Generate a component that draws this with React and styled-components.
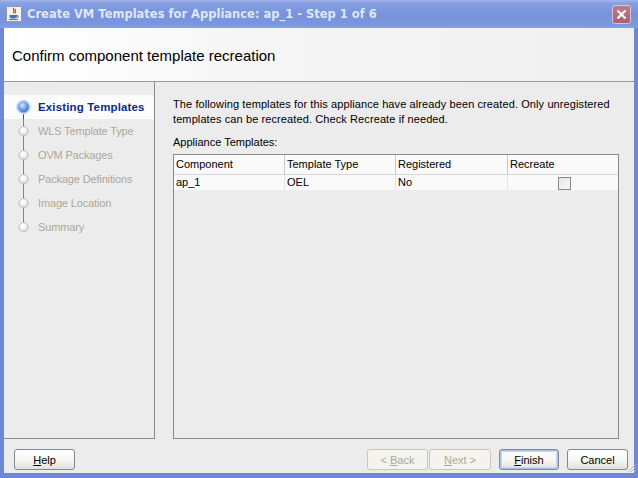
import styled, { createGlobalStyle } from "styled-components";

const Global = createGlobalStyle`
  html, body { margin: 0; padding: 0; background: #ececec; }
  body { font-family: "Liberation Sans", Arial, sans-serif; font-size: 11px; color: #000; }
`;

const steps = [
  "Existing Templates",
  "WLS Template Type",
  "OVM Packages",
  "Package Definitions",
  "Image Location",
  "Summary",
];

const columns = ["Component", "Template Type", "Registered", "Recreate"];

const StepMarker = ({ active, first, last }) => (
  <MarkerSvg width="22" height="24" viewBox="0 0 22 24">
    <defs>
      <radialGradient id="dotOn" cx="40%" cy="35%" r="70%">
        <stop offset="0%" stopColor="#dbe9ff" />
        <stop offset="55%" stopColor="#6f9ee8" />
        <stop offset="100%" stopColor="#3a6acc" />
      </radialGradient>
      <radialGradient id="dotOff" cx="40%" cy="35%" r="70%">
        <stop offset="0%" stopColor="#ffffff" />
        <stop offset="60%" stopColor="#f0f0f0" />
        <stop offset="100%" stopColor="#cfcfcf" />
      </radialGradient>
    </defs>
    {!first && <line x1="11.5" y1="0" x2="11.5" y2="12" stroke="#858585" strokeWidth="1" />}
    {!last && (
      <line x1="11.5" y1="12" x2="11.5" y2="24" stroke={active ? "#2c4ea8" : "#858585"} strokeWidth="1" />
    )}
    {active ? (
      <>
        <circle cx="11.5" cy="12" r="7" fill="#e4eefc" stroke="#c6d8f6" strokeWidth="1" />
        <circle cx="11.5" cy="12" r="5.5" fill="url(#dotOn)" stroke="#7aa0e4" strokeWidth="0.8" />
      </>
    ) : (
      <circle cx="11.5" cy="12" r="4.5" fill="url(#dotOff)" stroke="#bcbcbc" strokeWidth="1" />
    )}
  </MarkerSvg>
);

const App = () => {
  return (
    <>
      <Global />
      <Window>
        <TitleBar>
          <AppIcon>
            <svg width="16" height="16" viewBox="0 0 16 16">
              <rect x="0.5" y="0.5" width="15" height="15" rx="1" fill="#f4f2ea" stroke="#8a96b8" />
              <path d="M8 2 C6 4 9 5 7.5 7.5 M9.5 3 C8.5 5 10.5 5.5 9 7.5" stroke="#e0401c" strokeWidth="1.2" fill="none" />
              <path d="M3.5 9 H11 V10.5 C11 12 9.5 12.5 7.2 12.5 C5 12.5 3.5 12 3.5 10.5 Z" fill="#4a6fb0" />
              <path d="M11 9.5 C13 9.5 13 11.5 11 11.5" stroke="#4a6fb0" strokeWidth="1" fill="none" />
              <path d="M3 13.5 H12" stroke="#4a6fb0" strokeWidth="1" />
            </svg>
          </AppIcon>
          <TitleText>Create VM Templates for Appliance: ap_1 - Step 1 of 6</TitleText>
          <CloseButton>
            <svg width="11" height="11" viewBox="0 0 11 11">
              <path d="M1.5 1.5 L9.5 9.5 M9.5 1.5 L1.5 9.5" stroke="#fff" strokeWidth="2.2" />
            </svg>
          </CloseButton>
        </TitleBar>

        <Header>
          <HeaderTitle>Confirm component template recreation</HeaderTitle>
        </Header>

        <Main>
          <NavPanel>
            {steps.map((s, i) => (
              <Step key={s} $active={i === 0}>
                <StepMarker active={i === 0} first={i === 0} last={i === steps.length - 1} />
                <StepLabel $active={i === 0}>{s}</StepLabel>
              </Step>
            ))}
          </NavPanel>

          <Content>
            <Intro>
              The following templates for this appliance have already been created. Only unregistered
              templates can be recreated. Check Recreate if needed.
            </Intro>
            <Caption>Appliance Templates:</Caption>
            <TableBox>
              <HeadRow>
                {columns.map((c) => (
                  <HeadCell key={c}>{c}</HeadCell>
                ))}
              </HeadRow>
              <DataRow>
                <Cell>ap_1</Cell>
                <Cell>OEL</Cell>
                <Cell>No</Cell>
                <Cell $center>
                  <Check />
                </Cell>
              </DataRow>
            </TableBox>
          </Content>
        </Main>

        <Footer>
          <Button $w="61px">
            <u>H</u>elp
          </Button>
          <Spacer />
          <Button disabled $w="61px">
            &lt; <u>B</u>ack
          </Button>
          <Button disabled $w="62px" $gap="1px">
            <u>N</u>ext &gt;
          </Button>
          <Button $focus $w="60px" $gap="8px">
            <u>F</u>inish
          </Button>
          <Button $w="61px" $gap="8px">Cancel</Button>
          <Grip>
            <svg width="10" height="10" viewBox="0 0 10 10">
              <path d="M9 1 L1 9 M9 4 L4 9 M9 7 L7 9" stroke="#b8b8b8" strokeWidth="1" />
            </svg>
          </Grip>
        </Footer>
      </Window>
    </>
  );
};

export default App;

const Window = styled.div`
  width: 638px;
  height: 478px;
  box-sizing: border-box;
  display: flex;
  flex-direction: column;
  background: #ececec;
  border-left: 4px solid #6f88d6;
  border-right: 4px solid #6f88d6;
  border-bottom: 5px solid #6f88d6;
  position: relative;
`;

const TitleBar = styled.div`
  height: 28px;
  flex: none;
  margin: 0 -4px;
  padding: 0 6px;
  display: flex;
  align-items: center;
  background: linear-gradient(#a4b6ea 0px, #86a0e3 3px, #7893dc 14px, #7a96df 24px, #84a2e4 28px);
`;

const AppIcon = styled.div`
  width: 16px;
  height: 16px;
  margin-right: 5px;
  display: flex;
`;

const TitleText = styled.div`
  flex: 1;
  font-family: "DejaVu Sans", Verdana, sans-serif;
  font-weight: bold;
  font-size: 11.5px;
  color: #dfe7f9;
  white-space: nowrap;
`;

const CloseButton = styled.div`
  width: 17px;
  height: 17px;
  margin-right: 1px;
  border: 1px solid #d9c3cf;
  border-radius: 3px;
  background: linear-gradient(#bd7d8c, #a85f72);
  display: flex;
  align-items: center;
  justify-content: center;
`;

const Header = styled.div`
  height: 54px;
  flex: none;
  box-sizing: border-box;
  border-bottom: 1px solid #9a9a9a;
  background: linear-gradient(90deg, #ffffff 0%, #f6f6f6 40%, #f0f0f0 100%);
  display: flex;
  align-items: center;
  padding: 1px 0 0 8px;
`;

const HeaderTitle = styled.div`
  font-size: 15px;
  color: #000;
`;

const Main = styled.div`
  display: flex;
  flex: none;
  height: 357px;
`;

const NavPanel = styled.div`
  width: 151px;
  box-sizing: border-box;
  border-right: 1px solid #8a8a8a;
  border-bottom: 1px solid #8a8a8a;
  padding-top: 13px;
  display: flex;
  flex-direction: column;
`;

const Step = styled.div`
  height: 24px;
  display: flex;
  align-items: center;
  background: ${(p) => (p.$active ? "#fcfcfc" : "transparent")};
`;

const MarkerSvg = styled.svg`
  flex: none;
  margin-left: 8px;
  margin-right: 4px;
  display: block;
`;

const StepLabel = styled.span`
  font-size: ${(p) => (p.$active ? "11.5px" : "11px")};
  letter-spacing: ${(p) => (p.$active ? "0.15px" : "-0.15px")};
  font-weight: ${(p) => (p.$active ? "bold" : "normal")};
  color: ${(p) => (p.$active ? "#0c2a8a" : "#aca899")};
  white-space: nowrap;
`;

const Content = styled.div`
  margin-left: 18px;
  width: 446px;
  display: flex;
  flex-direction: column;
  padding-top: 15px;
`;

const Intro = styled.div`
  font-size: 11px;
  line-height: 15px;
  letter-spacing: 0.1px;
  width: 446px;
`;

const Caption = styled.div`
  font-size: 11px;
  line-height: 15px;
  margin-top: 8px;
  margin-bottom: 4px;
`;

const TableBox = styled.div`
  flex: 1;
  border: 1px solid #8a8a8a;
  background: #ececec;
`;

const HeadRow = styled.div`
  display: grid;
  grid-template-columns: 111px 111px 112px 1fr;
  height: 19px;
  border-bottom: 1px solid #d6d6d6;
  background: repeating-linear-gradient(90deg, #f7f7f7 0px, #fdfdfd 1px, #f4f4f4 2px);
`;

const HeadCell = styled.div`
  font-size: 11px;
  line-height: 19px;
  padding-left: 2px;
  border-right: 1px solid #c8c8c8;
  &:last-child { border-right: none; }
`;

const DataRow = styled.div`
  display: grid;
  grid-template-columns: 111px 111px 112px 1fr;
  height: 15px;
  background: #fafafa;
`;

const Cell = styled.div`
  font-size: 11px;
  line-height: 15px;
  padding-left: 2px;
  border-right: 1px solid #e4e4e4;
  display: flex;
  align-items: center;
  justify-content: ${(p) => (p.$center ? "center" : "flex-start")};
  &:last-child { border-right: none; }
`;

const Check = styled.div`
  width: 13px;
  height: 13px;
  box-sizing: border-box;
  border: 1px solid #8a8a8a;
  background: linear-gradient(135deg, #e6e6e6, #f8f8f8);
  margin-top: 2px;
`;

const Footer = styled.div`
  flex: 1;
  display: flex;
  align-items: flex-start;
  padding: 10px 6px 0 10px;
  position: relative;
`;

const Spacer = styled.div`
  flex: 1;
`;

const Button = styled.button`
  width: ${(p) => p.$w};
  height: 21px;
  margin-left: ${(p) => p.$gap || "0"};
  padding: 0;
  box-sizing: border-box;
  font-family: "Liberation Sans", Arial, sans-serif;
  font-size: 11px;
  color: #000;
  border-radius: 3px;
  border: 1px solid #7f8a95;
  background: linear-gradient(#ffffff 0%, #f5f5f2 55%, #e2e1da 100%);
  box-shadow: ${(p) => (p.$focus ? "inset 0 0 0 1px #a8c2ec, inset 0 0 0 2px #c8d8f4" : "none")};
  &:disabled {
    color: #aca899;
    border-color: #c9c7ba;
    background: #f4f3ee;
  }
  u { text-decoration: underline; }
`;

const Grip = styled.div`
  position: absolute;
  right: -3px;
  bottom: 0;
  width: 10px;
  height: 10px;
`;
